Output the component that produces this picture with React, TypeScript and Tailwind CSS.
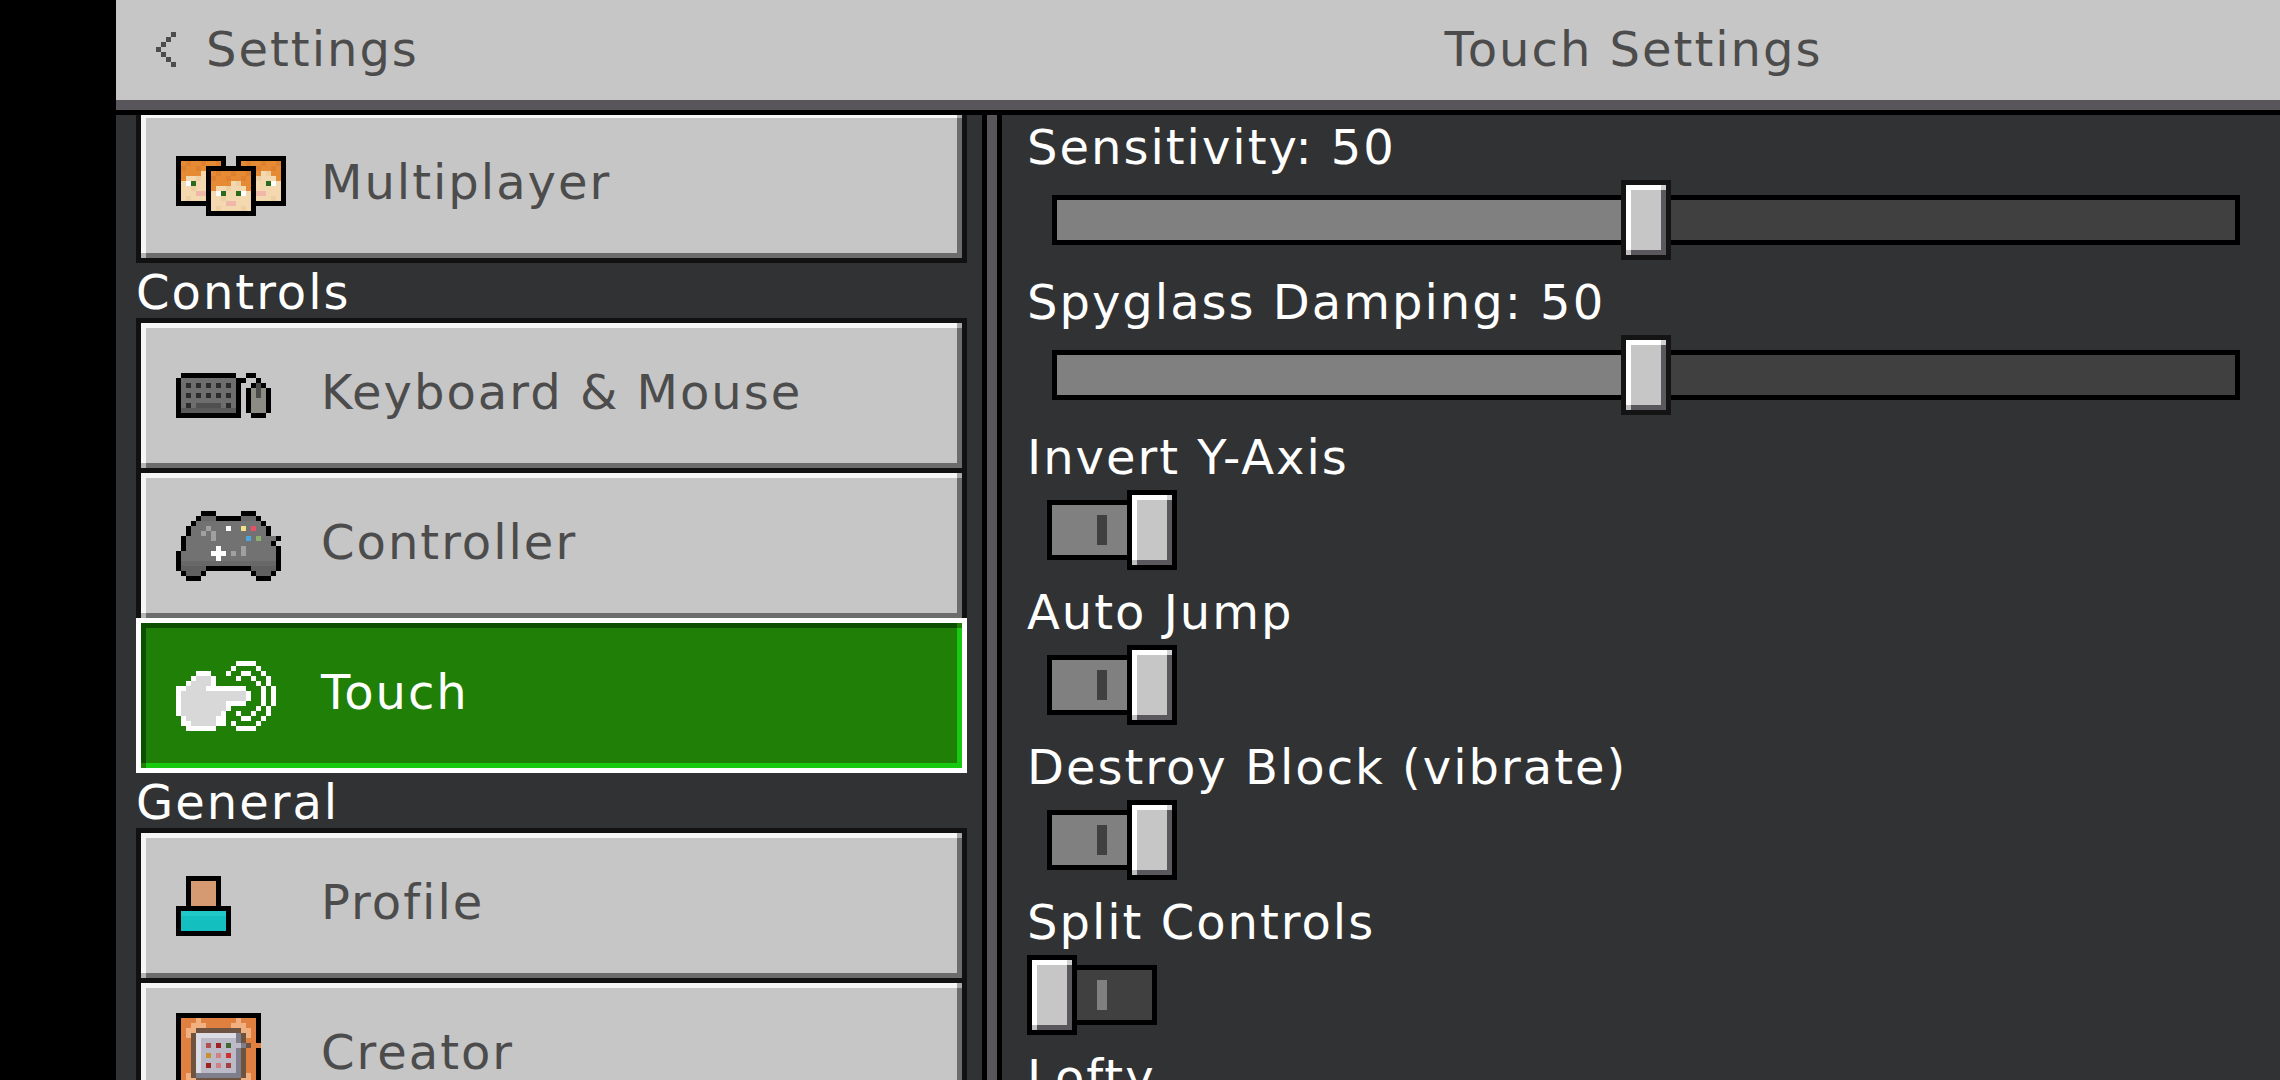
import type { ReactNode } from 'react';

const font = { fontFamily: '"DejaVu Sans", sans-serif' };

const Pixels = ({ rows, colors }: { rows: string[]; colors: Record<string, string> }) => (
    <svg width={rows[0].length * 5} height={rows.length * 5} viewBox={`0 0 ${rows[0].length} ${rows.length}`} shapeRendering="crispEdges" className="block shrink-0">
        {rows.flatMap((row, y) =>
            row.split('').map((c, x) => (colors[c] ? <rect key={`${x}-${y}`} x={x} y={y} width={1} height={1} fill={colors[c]} /> : null)),
        )}
    </svg>
);

const Chevron = () => (
    <Pixels rows={['...C', '..C.', '.C..', 'C...', '.C..', '..C.', '...C']} colors={{ C: '#4c4c4c' }} />
);

const faceColors: Record<string, string> = {
    K: '#000000', O: '#e68a33', o: '#dd8030', s: '#f3d8b0', S: '#ecd0a4', W: '#ffffff', G: '#2b6b1a', P: '#f0b8a8',
};
const face = ['OoOOoOOo', 'oOOoOOoO', 'OOOOsSOO', 'OssSsssO', 'sWGssGWs', 'ssSsssss', 'sssPPsss', 'sSssssSs'];

// three heads: left and right first, the middle one over them
const multiRows = () => {
    const grid = Array.from({ length: 12 }, () => Array(22).fill('.'));
    const put = (ox: number, oy: number) => {
        for (let y = 0; y < 10; y++)
            for (let x = 0; x < 10; x++)
                grid[oy + y][ox + x] = x === 0 || y === 0 || x === 9 || y === 9 ? 'K' : face[y - 1][x - 1];
    };
    put(0, 0);
    put(12, 0);
    put(6, 2);
    return grid.map((r) => r.join(''));
};

const keyboardRows = [
    '.KKKKKKKKKKK..KK...',
    'KgggggggggggKK..K..',
    'KgdgdgdgdgdgK..KnK.',
    'KgggggggggggK.KmnmK',
    'KgdgdgdgdgdgK.KmnmK',
    'KgggggggggggK.KmmmK',
    'KgdgbbbbbgdgK.KmmmK',
    'KlllllllllllK.KmmmK',
    'KKKKKKKKKKKKK..KKK.',
];

const controllerRows = [
    '.....KKK.....KKK.....',
    '....KeeeKKKKKeeeK....',
    '...KgggggggggggggK...',
    '..KggglgggwggygrggK..',
    '..KgglglggggggggggK..',
    '.KggggglggggggbgcgggK.'.slice(0, 21),
    '.KgggggggggggggggggK.',
    '.KggggggwgggglggggggK.'.slice(0, 21),
    'KggggggwwwglglggggggK',
    'KgggggggwgggggggggggK',
    'KeeeeeeeeeeeeeeeeeeeK',
    'KdddddKKKKKKKKKdddddK',
    '.KdddK.........KdddK.',
    '..KKK...........KKK..',
];

const touchRows = [
    '............WWWW....',
    '...........W....W...',
    '....WWW...W..WW..W..',
    '...WhhhW....W..W..W.',
    '..WhhhhW........W.W.',
    'WWhhhhWWWWWWWW...W.W',
    'WhhhhhhhhhhhhhW..W.W',
    'WhhhhhhhhhhhhhW..W.W',
    'WhhhhhhhhhWWWW...W.W',
    'WhhhhhhhhhW.....W.W.',
    'WhhhhhhhhW..W..W..W.',
    '.WhhhhhhWW...WW..W..',
    '.WWhhhhhWW.W....W...',
    '..WWWWWW....WWWW....',
];

const profileRows = [
    '..KKKKKKK..',
    '..KpppppK..',
    '..KpppppK..',
    '..KpppppK..',
    '..KpppppK..',
    '..KpppppK..',
    'KKKKKKKKKKK',
    'KtttttttttK',
    'KcccccccccK',
    'KcccccccccK',
    'KcccccccccK',
    'KKKKKKKKKKK',
];

const creatorRows = [
    'KKKKKKKKKKKKKKKKK',
    'KoooLoooooooLoooK',
    'KooLLLoooooLLLooK',
    'KoLLbbbbbbbbbLLoK',
    'KoLbWWWWWWWWDbLoK',
    'KoobWcccccccDbooK',
    'KoobWc1c2c3ccDbooK'.slice(0, 12) + 'cDbooK',
    'KoobWcccccccDbooK',
    'KoobWc4c5c6cDbooK',
    'KoobWcccccccDbooK',
    'KoobWc2c5c7cDbooK',
    'KoobWcccccccDbooK',
    'KoLbDDDDDDDDDbLoK',
    'KoLLbbbbbbbbbLLoK',
    'KooLLLoooooLLLooK',
    'KoooLoooooooLoooK',
    'KKKKKKKKKKKKKKKKK',
];

const icons: Record<string, ReactNode> = {
    Multiplayer: <Pixels rows={multiRows()} colors={faceColors} />,
    'Keyboard & Mouse': (
        <Pixels rows={keyboardRows} colors={{ K: '#000000', g: '#6e6e6e', d: '#2b2b2b', b: '#505050', l: '#5a5a5a', m: '#8c8c84', n: '#4a4a48' }} />
    ),
    Controller: (
        <Pixels
            rows={controllerRows}
            colors={{ K: '#000000', g: '#727272', e: '#686868', d: '#606060', l: '#a0a0a0', w: '#ffffff', y: '#f0e08a', r: '#e8506a', b: '#4aa6dc', c: '#8cb070' }}
        />
    ),
    Touch: <Pixels rows={touchRows} colors={{ W: '#ffffff', h: '#d8d8d8' }} />,
    Profile: <Pixels rows={profileRows} colors={{ K: '#000000', p: '#d69a72', t: '#20c8c8', c: '#14bfbf' }} />,
    Creator: (
        <Pixels
            rows={creatorRows}
            colors={{
                K: '#000000', o: '#e08040', L: '#f0b080', b: '#6e5440', W: '#dcdce4', c: '#bcbac6', D: '#7e7e8c',
                '1': '#b05050', '2': '#a02020', '3': '#406830', '4': '#c89030', '5': '#d08080', '6': '#d03030', '7': '#a04040',
            }}
        />
    ),
};

const MenuButton = ({ name, active, first }: { name: string; active?: boolean; first?: boolean }) => (
    <div
        className={`relative h-[155px] w-[831px] shrink-0 border-[5px] ${first ? '-mt-[7px]' : '-mt-[5px]'} ${
            active ? 'z-10 border-white' : 'border-[#111111]'
        }`}
    >
        <div
            className={`relative flex h-full items-center border-[5px] pl-[30px] ${
                active
                    ? 'border-t-[#0c4f00] border-l-[#0c4f00] border-r-[#17c90f] border-b-[#17c90f] bg-[#1f7f06] text-white'
                    : 'border-t-[#f6f6f6] border-l-[#f6f6f6] border-r-[#6c6c6c] border-b-[#6c6c6c] bg-[#c6c6c6] text-[#4c4c4c]'
            }`}
        >
            <span className={`absolute -bottom-[5px] -left-[5px] h-[5px] w-[5px] ${active ? 'bg-[#1f7f06]' : 'bg-[#b4b4b4]'}`} />
            <span className={`absolute -top-[5px] -right-[5px] h-[5px] w-[5px] ${active ? 'bg-[#1f7f06]' : 'bg-[#a8a8a8]'}`} />
            <div className="w-[145px] shrink-0">{icons[name]}</div>
            <span className="pb-[6px] text-[48px] leading-[35px] tracking-[2px] whitespace-nowrap" style={font}>
                {name}
            </span>
        </div>
    </div>
);

const Section = ({ title }: { title: string }) => (
    <div className="mt-[12px] mb-[13px] h-[35px] text-[48px] leading-[35px] tracking-[2px] text-white" style={font}>
        {title}
    </div>
);

const Thumb = ({ edge }: { edge: string }) => (
    <div className={`h-[80px] w-[50px] border-[5px] ${edge}`}>
        <div className="relative h-full w-full border-[5px] border-t-white border-l-white border-r-[#5a585c] border-b-[#5a585c] bg-[#c6c6c6]">
            <span className="absolute -top-[5px] -right-[5px] h-[5px] w-[5px] bg-[#d0d0d0]" />
            <span className="absolute -bottom-[5px] -left-[5px] h-[5px] w-[5px] bg-[#c0c0c0]" />
        </div>
    </div>
);

const Row = ({ label, children }: { label: string; children?: ReactNode }) => (
    <div className="h-[155px] shrink-0">
        <div className="mb-[15px] h-[35px] text-[48px] leading-[35px] tracking-[2px] text-white whitespace-nowrap" style={font}>
            {label}
        </div>
        <div className="flex h-[80px] items-center">{children}</div>
    </div>
);

const Slider = () => (
    <div className="relative ml-[25px] flex h-[50px] w-[1188px] border-[5px] border-black">
        <div className="w-1/2 bg-[#808080]" />
        <div className="w-1/2 bg-[#404040]" />
        <div className="absolute top-1/2 left-1/2 -translate-x-1/2 -translate-y-1/2">
            <Thumb edge="border-[#141414]" />
        </div>
    </div>
);

const Toggle = ({ on }: { on?: boolean }) => (
    <div className={`relative ml-[20px] flex h-[60px] w-[110px] items-center justify-center border-[5px] border-black ${on ? 'bg-[#808080]' : 'bg-[#404040]'}`}>
        <div className={`h-[30px] w-[10px] ${on ? 'bg-[#404040]' : 'bg-[#808080]'}`} />
        <div className={`absolute -top-[15px] ${on ? '-right-[25px]' : '-left-[25px]'}`}>
            <Thumb edge="border-black" />
        </div>
    </div>
);

export default function App() {
    return (
        <div className="flex h-[1080px] w-[2280px] flex-col overflow-hidden bg-black pl-[116px]">
            <div className="flex h-[100px] shrink-0 bg-[#c6c6c6] text-[#4c4c4c]">
                <div className="flex w-[871px] items-start gap-[30px] pt-[32px] pl-[40px]">
                    <Chevron />
                    <span className="text-[48px] leading-[35px] tracking-[2px]" style={font}>
                        Settings
                    </span>
                </div>
                <div className="flex-1 pt-[32px] text-center text-[48px] leading-[35px] tracking-[2px]" style={font}>
                    Touch Settings
                </div>
            </div>
            <div className="h-[10px] shrink-0 bg-[#58565a]" />
            <div className="h-[5px] shrink-0 bg-black" />
            <div className="flex min-h-0 flex-1">
                <div className="flex w-[866px] shrink-0 flex-col overflow-hidden bg-[#313233] pl-[20px]">
                    <MenuButton name="Multiplayer" first />
                    <Section title="Controls" />
                    <MenuButton name="Keyboard & Mouse" first={false} />
                    <MenuButton name="Controller" />
                    <MenuButton name="Touch" active />
                    <Section title="General" />
                    <MenuButton name="Profile" />
                    <MenuButton name="Creator" />
                </div>
                <div className="w-[5px] shrink-0 bg-black" />
                <div className="w-[10px] shrink-0 bg-[#58565a]" />
                <div className="w-[5px] shrink-0 bg-black" />
                <div className="flex flex-1 flex-col overflow-hidden bg-[#313233] pt-[15px] pl-[25px]">
                    <Row label="Sensitivity: 50">
                        <Slider />
                    </Row>
                    <Row label="Spyglass Damping: 50">
                        <Slider />
                    </Row>
                    <Row label="Invert Y-Axis">
                        <Toggle on />
                    </Row>
                    <Row label="Auto Jump">
                        <Toggle on />
                    </Row>
                    <Row label="Destroy Block (vibrate)">
                        <Toggle on />
                    </Row>
                    <Row label="Split Controls">
                        <Toggle />
                    </Row>
                    <Row label="Lofty" />
                </div>
            </div>
        </div>
    );
}
